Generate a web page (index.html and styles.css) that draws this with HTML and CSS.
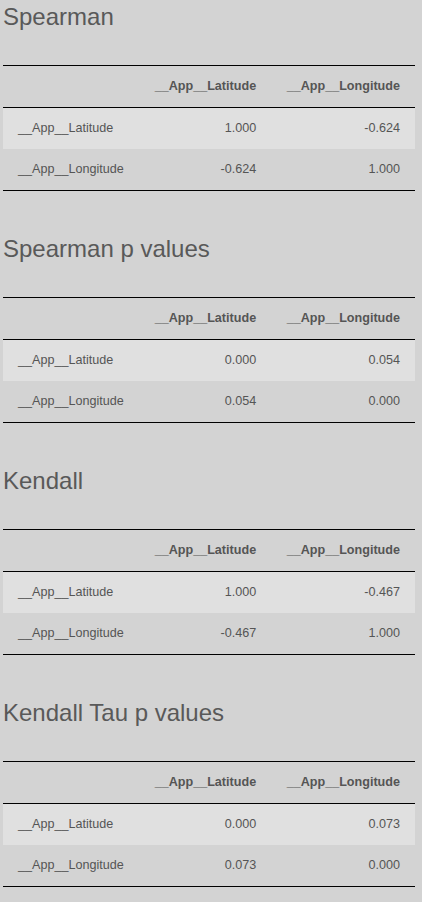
FILE: index.html
```html
<!DOCTYPE html>
<html>
<head>
<meta charset="utf-8">
<link rel="stylesheet" href="styles.css">
</head>
<body>
<section class="block">
  <h2 class="title">Spearman</h2>
  <table class="corr">
    <colgroup><col class="c0"><col class="c1"><col class="c2"></colgroup>
    <thead><tr><th></th><th>__App__Latitude</th><th>__App__Longitude</th></tr></thead>
    <tbody>
      <tr class="odd"><td class="lbl">__App__Latitude</td><td>1.000</td><td>-0.624</td></tr>
      <tr><td class="lbl">__App__Longitude</td><td>-0.624</td><td>1.000</td></tr>
    </tbody>
  </table>
</section>
<section class="block">
  <h2 class="title">Spearman p values</h2>
  <table class="corr">
    <colgroup><col class="c0"><col class="c1"><col class="c2"></colgroup>
    <thead><tr><th></th><th>__App__Latitude</th><th>__App__Longitude</th></tr></thead>
    <tbody>
      <tr class="odd"><td class="lbl">__App__Latitude</td><td>0.000</td><td>0.054</td></tr>
      <tr><td class="lbl">__App__Longitude</td><td>0.054</td><td>0.000</td></tr>
    </tbody>
  </table>
</section>
<section class="block">
  <h2 class="title">Kendall</h2>
  <table class="corr">
    <colgroup><col class="c0"><col class="c1"><col class="c2"></colgroup>
    <thead><tr><th></th><th>__App__Latitude</th><th>__App__Longitude</th></tr></thead>
    <tbody>
      <tr class="odd"><td class="lbl">__App__Latitude</td><td>1.000</td><td>-0.467</td></tr>
      <tr><td class="lbl">__App__Longitude</td><td>-0.467</td><td>1.000</td></tr>
    </tbody>
  </table>
</section>
<section class="block">
  <h2 class="title">Kendall Tau p values</h2>
  <table class="corr">
    <colgroup><col class="c0"><col class="c1"><col class="c2"></colgroup>
    <thead><tr><th></th><th>__App__Latitude</th><th>__App__Longitude</th></tr></thead>
    <tbody>
      <tr class="odd"><td class="lbl">__App__Latitude</td><td>0.000</td><td>0.073</td></tr>
      <tr><td class="lbl">__App__Longitude</td><td>0.073</td><td>0.000</td></tr>
    </tbody>
  </table>
</section>
</body>
</html>
```
FILE: styles.css
```css
html { background: #d3d3d3; }
body {
  margin: 0;
  padding: 3px 3px 0 3px;
  background: #d3d3d3;
  color: #555555;
  font-family: "Liberation Sans", Arial, sans-serif;
}
.block { margin-bottom: 44px; }
.title {
  margin: 0 0 34px 0;
  font-size: 24px;
  font-weight: normal;
  line-height: 28px;
  color: #595959;
}
.corr {
  width: 412px;
  border-collapse: collapse;
  font-size: 12.6px;
  border-top: 1px solid #000;
  border-bottom: 1px solid #000;
}
.c0 { width: 137px; }
.c1 { width: 131px; }
.c2 { width: 144px; }
.corr thead tr { border-bottom: 1px solid #000; }
.corr th, .corr td {
  padding: 13px 15px;
  line-height: 15px;
  text-align: right;
  white-space: nowrap;
  color: #555555;
}
.corr th { font-weight: bold; }
.corr td.lbl { text-align: left; }
.corr tr.odd { background: #e0e0e0; }
```
